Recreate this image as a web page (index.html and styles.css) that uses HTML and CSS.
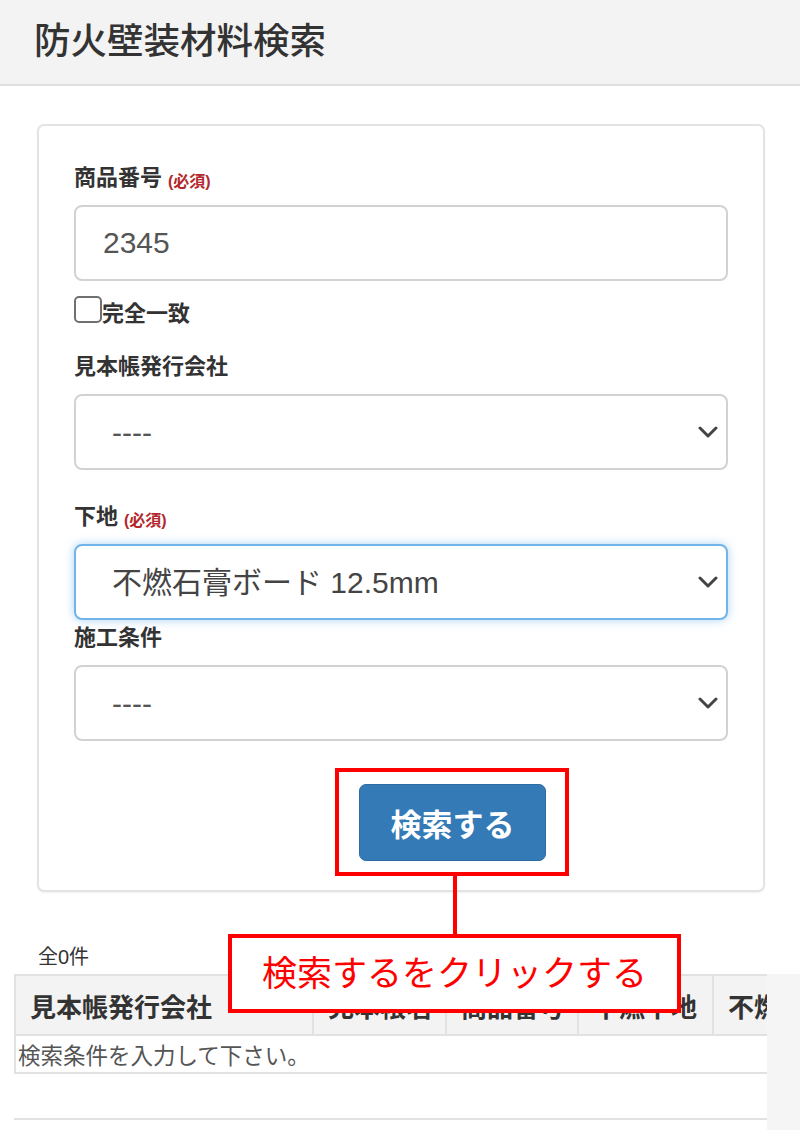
FILE: index.html
```html
<!DOCTYPE html>
<html lang="ja">

<head>
    <meta charset="UTF-8">
    <meta name="viewport" content="width=device-width, initial-scale=1.0">
    <title>防火壁装材料検索</title>
    <link rel="stylesheet" href="styles.css">
</head>

<body>
    <header class="page-header">
        <h1 class="page-title">防火壁装材料検索</h1>
    </header>

    <main class="page-body">
        <form class="search-panel">
            <div class="field">
                <label class="field-label" for="product-no">商品番号<span class="required">(必須)</span></label>
                <input class="form-control" id="product-no" type="text" value="2345">
            </div>
            <div class="check-row">
                <input class="check-box" id="exact" type="checkbox">
                <label class="check-label" for="exact">完全一致</label>
            </div>

            <div class="field field-publisher">
                <label class="field-label" for="publisher">見本帳発行会社</label>
                <div class="select-wrap">
                    <select class="form-control form-select" id="publisher">
                        <option>----</option>
                    </select>
                    <svg class="select-arrow" width="20" height="12" viewBox="0 0 20 12"><path d="M2 2 L10 10 L18 2" /></svg>
                </div>
            </div>

            <div class="field field-base">
                <label class="field-label" for="base">下地<span class="required">(必須)</span></label>
                <div class="select-wrap">
                    <select class="form-control form-select is-focused" id="base">
                        <option>不燃石膏ボード 12.5mm</option>
                    </select>
                    <svg class="select-arrow" width="20" height="12" viewBox="0 0 20 12"><path d="M2 2 L10 10 L18 2" /></svg>
                </div>
            </div>

            <div class="field field-condition">
                <label class="field-label" for="condition">施工条件</label>
                <div class="select-wrap">
                    <select class="form-control form-select" id="condition">
                        <option>----</option>
                    </select>
                    <svg class="select-arrow" width="20" height="12" viewBox="0 0 20 12"><path d="M2 2 L10 10 L18 2" /></svg>
                </div>
            </div>

            <div class="actions">
                <div class="callout">
                    <button class="btn-search" type="button">検索する</button>
                    <div class="callout-note">検索するをクリックする</div>
                </div>
            </div>
        </form>

        <p class="result-count">全0件</p>

        <div class="result-area">
            <div class="result-scroll">
                <table class="result-table">
                    <colgroup>
                        <col class="col-publisher">
                        <col class="col-book">
                        <col class="col-product">
                        <col class="col-base">
                        <col class="col-cert">
                    </colgroup>
                    <thead>
                        <tr>
                            <th>見本帳発行会社</th>
                            <th>見本帳名</th>
                            <th>商品番号</th>
                            <th>不燃下地</th>
                            <th>不燃認定</th>
                        </tr>
                    </thead>
                    <tbody>
                        <tr class="row-message">
                            <td colspan="5">検索条件を入力して下さい。</td>
                        </tr>
                        <tr class="row-empty">
                            <td colspan="5"></td>
                        </tr>
                    </tbody>
                </table>
            </div>
            <div class="result-gutter"></div>
        </div>
    </main>
</body>

</html>
```

FILE: styles.css
```css
/* 全体 */
body {
    margin: 0;
    font-family: "Liberation Sans", "Noto Sans CJK JP", sans-serif;
    color: #333;
    background: #fff;
}

/* ヘッダー */
.page-header {
    height: 84px;
    background: #f3f3f3;
    border-bottom: 2px solid #dedede;
}

.page-title {
    margin: 0;
    padding-left: 34px;
    font-size: 36.5px;
    font-weight: 500;
    line-height: 84px;
    color: #333;
}

.page-body {
    padding-top: 38px;
}

/* 検索フォーム */
.search-panel {
    width: 728px;
    margin: 0 0 0 37px;
    padding: 37px 35px 14px;
    box-sizing: border-box;
    border: 2px solid #e3e3e3;
    border-radius: 7px;
    box-shadow: 0 1px 2px rgba(0, 0, 0, 0.06);
}

.field-label {
    display: block;
    margin-bottom: 12px;
    font-size: 22px;
    font-weight: bold;
    line-height: 30px;
    color: #333;
}

.required {
    position: relative;
    top: 2px;
    margin-left: 6px;
    font-size: 16px;
    font-weight: bold;
    line-height: 1;
    color: #b3282d;
}

.form-control {
    display: block;
    width: 100%;
    height: 76px;
    margin: 0;
    padding: 0 27px;
    box-sizing: border-box;
    font-family: inherit;
    font-size: 30px;
    color: #555;
    background: #fff;
    border: 2px solid #d2d2d2;
    border-radius: 8px;
    outline: none;
}

.form-select {
    padding: 0 44px 0 36px;
    -webkit-appearance: none;
    appearance: none;
}

.form-select.is-focused {
    color: #444;
    border-color: #72b4ea;
    box-shadow: 0 0 10px rgba(102, 175, 233, 0.55);
}

.select-wrap {
    position: relative;
}

.select-arrow {
    position: absolute;
    right: 10px;
    top: 50%;
    margin-top: -6px;
    pointer-events: none;
}

.select-arrow path {
    fill: none;
    stroke: #444;
    stroke-width: 3;
    stroke-linecap: round;
    stroke-linejoin: round;
}

/* 完全一致 */
.check-row {
    display: flex;
    align-items: flex-start;
    height: 30px;
    margin-top: 15px;
}

.check-box {
    width: 28px;
    height: 27px;
    margin: 0;
    -webkit-appearance: none;
    appearance: none;
    background: #fff;
    border: 2px solid #707070;
    border-radius: 5px;
}

.check-label {
    padding-top: 3px;
    font-size: 22px;
    font-weight: bold;
    line-height: 30px;
}

.field-publisher {
    margin-top: 26px;
}

.field-base {
    margin-top: 32px;
}

.field-condition {
    margin-top: 3px;
}

/* ボタンと注釈 */
.actions {
    margin-top: 27px;
    padding-left: 261px;
}

.callout {
    position: relative;
    width: fit-content;
    padding: 12px 19px 11px 20px;
    border: 4px solid #f00;
}

.callout::after {
    content: '';
    position: absolute;
    left: 114px;
    top: calc(100% + 4px);
    width: 4px;
    height: 58px;
    background: #f00;
}

.btn-search {
    display: block;
    width: 187px;
    height: 77px;
    padding: 0;
    font-family: inherit;
    font-size: 31px;
    font-weight: bold;
    color: #fff;
    background: #337ab7;
    border: 1px solid #2e6da4;
    border-radius: 7px;
}

.callout-note {
    position: absolute;
    z-index: 1;
    left: -111px;
    top: calc(100% + 62px);
    padding: 0 30px;
    font-size: 35px;
    line-height: 71px;
    color: #f00;
    white-space: nowrap;
    background: #fff;
    border: 4px solid #f00;
}

/* 検索結果 */
.result-count {
    margin: 52px 0 0 38px;
    font-size: 20px;
    line-height: 26px;
    color: #333;
}

.result-area {
    display: flex;
    margin-top: 4px;
    min-height: 160px;
}

.result-scroll {
    width: 753px;
    margin-left: 14px;
    overflow: hidden;
    background: #fff;
}

.result-gutter {
    flex: 1;
    background: #f5f5f5;
}

.result-table {
    width: 833px;
    table-layout: fixed;
    border-collapse: collapse;
}

.col-publisher { width: 298px; }
.col-book { width: 133px; }
.col-product { width: 132px; }
.col-base { width: 135px; }
.col-cert { width: 135px; }

.result-table th {
    height: 58px;
    padding: 0 14px;
    font-size: 26px;
    font-weight: bold;
    text-align: left;
    white-space: nowrap;
    overflow: hidden;
    color: #333;
    background: #f3f3f3;
    border: 2px solid #e2e2e2;
}

.result-table td {
    padding: 0 2px;
    font-size: 22.5px;
    color: #555;
    border: 2px solid #e2e2e2;
}

.row-message td {
    height: 36px;
}

.row-empty td {
    height: 44px;
    border-left-color: #fff;
}
```
